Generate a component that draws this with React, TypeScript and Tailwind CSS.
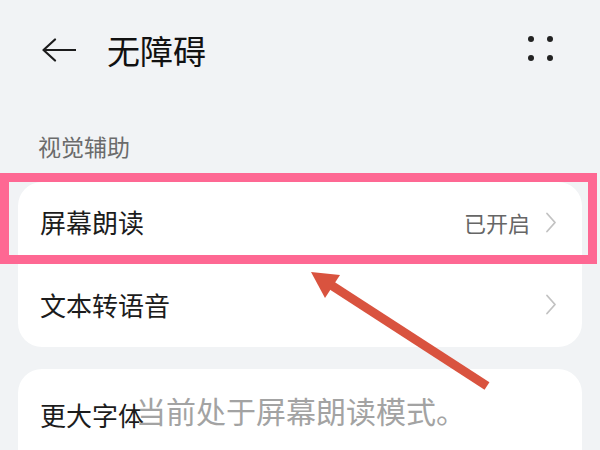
import React from "react";

const BackArrow = () => (
  <svg width="34" height="24" viewBox="0 0 34 24" fill="none">
    <path d="M13 1.5 L1.5 12 L13 22.5 M1.5 12 H33.5" stroke="#1c1c1c" strokeWidth="2.2" strokeLinecap="round" strokeLinejoin="round" />
  </svg>
);

const Chevron = () => (
  <svg width="12" height="21" viewBox="0 0 12 21" fill="none">
    <path d="M2 1.5 L10 10.5 L2 19.5" stroke="#c2c2c2" strokeWidth="1.8" strokeLinecap="round" strokeLinejoin="round" />
  </svg>
);

const Row = ({ title, value, height }: { title: string; value?: string; height: string }) => (
  <div className={`flex items-center pl-[22px] pr-[25px] ${height}`}>
    <span className="text-[26px] leading-none text-[#1c1c1c]">{title}</span>
    <div className="ml-auto flex items-center gap-[15px]">
      {value && <span className="text-[22px] leading-none text-[#666]">{value}</span>}
      <Chevron />
    </div>
  </div>
);

export default function App() {
  return (
    <div className="relative w-[600px] h-[450px] overflow-hidden bg-[#f1f3f5] font-['Noto_Sans_CJK_SC','Noto_Sans',sans-serif]">
      {/* header */}
      <div className="flex items-center h-[100px] pl-[42px] pr-[47px]">
        <BackArrow />
        <h1 className="ml-[31px] text-[33px] leading-none font-normal text-[#111]">无障碍</h1>
        <div className="ml-auto mb-[4px] grid grid-cols-2 gap-[13px]">
          <span className="w-[6px] h-[6px] rounded-full bg-[#222]" />
          <span className="w-[6px] h-[6px] rounded-full bg-[#222]" />
          <span className="w-[6px] h-[6px] rounded-full bg-[#222]" />
          <span className="w-[6px] h-[6px] rounded-full bg-[#222]" />
        </div>
      </div>

      <div className="mt-[35px] pl-[38px] text-[23px] leading-none text-[#6b6b6b]">视觉辅助</div>

      <div className="mt-[24px] mx-[18px] rounded-[24px] bg-white">
        <Row title="屏幕朗读" value="已开启" height="h-[80px]" />
        <Row title="文本转语音" height="h-[85px]" />
      </div>

      <div className="mt-[22px] mx-[18px] h-[120px] rounded-[24px] bg-white">
        <div className="flex items-center h-[92px] pl-[22px]">
          <span className="text-[26px] leading-none text-[#1c1c1c]">更大字体</span>
        </div>
      </div>

      {/* toast */}
      <div className="absolute left-[136px] top-[395px] text-[30px] leading-none text-[#a3a3a3]">
        当前处于屏幕朗读模式。
      </div>

      {/* highlight box */}
      <div className="absolute left-0 top-[173px] w-[597px] h-[91px] border-[9px] border-[#fe6893]" />

      {/* annotation arrow */}
      <svg className="absolute inset-0 pointer-events-none" width="600" height="450" viewBox="0 0 600 450">
        <line x1="331" y1="285" x2="487" y2="386" stroke="#d9533f" strokeWidth="9" />
        <polygon points="311,272 340,275 325,298" fill="#d9533f" />
      </svg>
    </div>
  );
}
